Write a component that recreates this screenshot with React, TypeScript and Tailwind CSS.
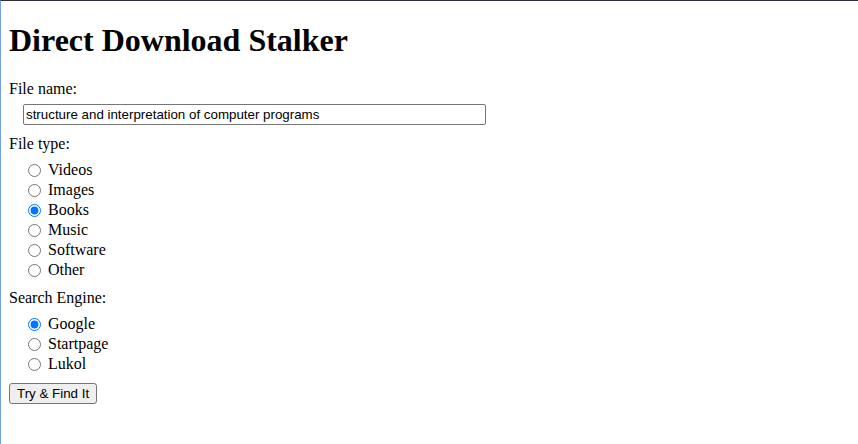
const fileTypes = ["Videos", "Images", "Books", "Music", "Software", "Other"];
const engines = ["Google", "Startpage", "Lukol"];

const RadioRow = ({
  name,
  label,
  checked,
}: {
  name: string;
  label: string;
  checked?: boolean;
}) => (
  <label className="flex h-5 items-center">
    <input
      type="radio"
      name={name}
      value={label}
      defaultChecked={checked}
      className="ml-[5px] mr-[3px] mt-[1px] h-[13px] w-[13px] accent-[#0075ff]"
    />
    <span className="ml-[4px]">{label}</span>
  </label>
);

export default function App() {
  return (
    <div
      className="box-border min-h-screen border-l border-t border-l-[#76a0ee] border-t-[#2d3038] bg-white px-2 text-[16px] text-black"
      style={{ fontFamily: '"Liberation Serif", "Times New Roman", serif' }}
    >
      <h1 className="mt-[21px] mb-[21px] text-[32px] font-bold leading-[37px]">
        Direct Download Stalker
      </h1>

      {/* File name */}
      <div className="leading-[18px]">File name:</div>
      <div className="ml-[14px] mt-[4px]">
        <input
          type="text"
          defaultValue="structure and interpretation of computer programs"
          className="box-border h-[21px] w-[463px] rounded-[2px] border border-[#767676] px-[2px] py-[1px] text-[13.333px] leading-[15px] text-black outline-none"
          style={{ fontFamily: '"Liberation Sans", Arial, sans-serif' }}
        />
      </div>

      {/* File type */}
      <div className="mt-[9px] leading-[18px]">File type:</div>
      <div className="ml-[14px] mt-[7px]">
        {fileTypes.map((t) => (
          <RadioRow key={t} name="type" label={t} checked={t === "Books"} />
        ))}
      </div>

      {/* Search engine */}
      <div className="mt-[9px] leading-[18px]">Search Engine:</div>
      <div className="ml-[14px] mt-[7px]">
        {engines.map((e) => (
          <RadioRow key={e} name="engine" label={e} checked={e === "Google"} />
        ))}
      </div>

      <button
        type="button"
        className="mt-[9px] box-border h-[21px] rounded-[3px] border border-[#767676] bg-[#efefef] px-[7px] py-[1px] text-[13.333px] leading-[15px] text-black"
        style={{ fontFamily: '"Liberation Sans", Arial, sans-serif' }}
      >
        Try &amp; Find It
      </button>
    </div>
  );
}
